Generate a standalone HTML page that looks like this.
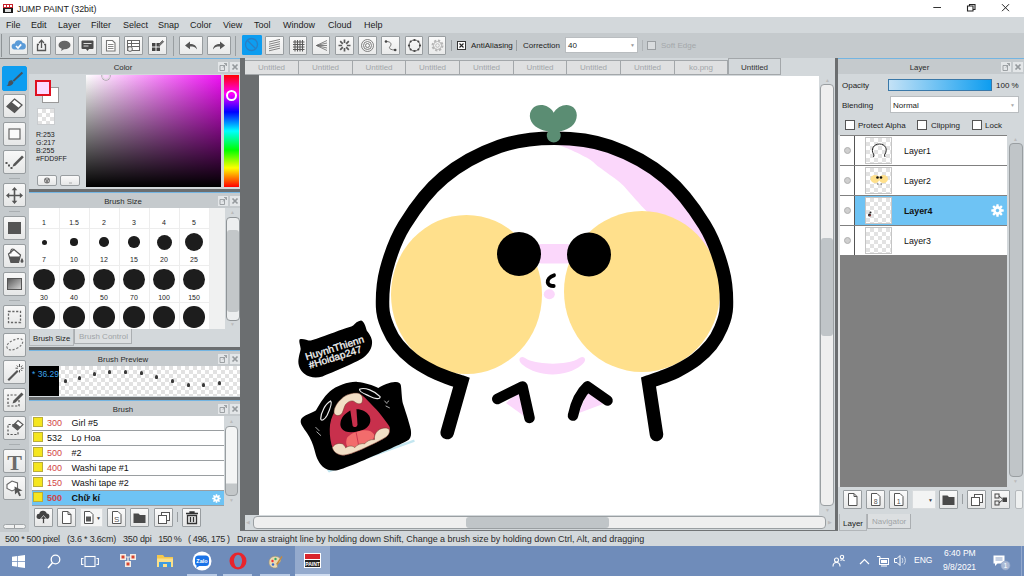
<!DOCTYPE html>
<html>
<head>
<meta charset="utf-8">
<title>JUMP PAINT (32bit)</title>
<style>
*{box-sizing:border-box;margin:0;padding:0}
html,body{width:1024px;height:576px;overflow:hidden;background:#d3d8db;font-family:"Liberation Sans",sans-serif;font-size:9px;color:#222}
.a{position:absolute}
div,span,svg{position:absolute}
.tx{white-space:nowrap;line-height:1}
.tb{top:36px;width:19px;height:19px;border:1px solid #989da0;background:linear-gradient(#fafafa,#e9eaea);border-radius:1px}
.tb svg,.lt svg,.bb svg{left:0;top:0}
.sep{width:1px;background:#999ea1}
.lt{left:3px;width:23px;height:24px;border:1px solid #989da0;background:linear-gradient(#f8f8f8,#e6e7e7);border-radius:2px}
.lsep{left:9px;width:11px;height:1px;background:#a9aeb1}
.ph{background:#c5cacd;border-top:1.500px solid #74b5e2;text-align:center;font-size:7.800px;line-height:16px;color:#2a2a2a;padding:1px 23px 0 0}
.pbtn{width:10px;height:10px;background:#e3e6e8}
.bb{width:19px;height:19px;border:1px solid #989da0;background:linear-gradient(#fafafa,#e6e7e7);border-radius:1px}
.dark{background:#6b6e70}
.row{left:32px;width:192px;height:14px;background:#fff}
.row .sq{left:1px;top:1px;width:10px;height:10px;background:#f5e61e;border:1px solid #b9ad3a}
.row .n{left:15px;top:3px;font-size:9px;color:#d24646}
.row .nm{left:39.500px;top:3px;font-size:9px;color:#111}
.lrow{left:840px;width:167px;height:29px;background:#fff}
.chk{background-color:#fff;background-image:linear-gradient(45deg,#e2e2e2 25%,transparent 25%,transparent 75%,#e2e2e2 75%),linear-gradient(45deg,#e2e2e2 25%,transparent 25%,transparent 75%,#e2e2e2 75%);background-size:6px 6px;background-position:0 0,3px 3px}
.cb{width:10px;height:10px;border:1px solid #555;background:#fff}
.tab{top:60px;height:15px;border:1px solid #a3a7aa;background:#dfe0e1;color:#a2a6a9;font-size:8px;text-align:center;line-height:14px}
</style>
</head>
<body>

<div style="left:0;top:0;width:1024px;height:17px;background:#fff">
<svg style="left:3px;top:4px" width="10" height="9" viewBox="0 0 10 9"><rect width="10" height="9" fill="#1a1a1a"/><rect width="10" height="4" fill="#c8202a"/><rect x="1" y="1" width="2" height="2" fill="#fff"/><rect x="4" y="1" width="2" height="2" fill="#fff"/><rect x="7" y="1" width="2" height="2" fill="#fff"/><rect x="2" y="5" width="6" height="3" fill="#ddd"/></svg>
<span class="tx" style="left:17px;top:4.500px;font-size:8.900px;color:#222">JUMP PAINT (32bit)</span>
<svg style="left:919px;top:0" width="100" height="16" viewBox="0 0 100 16"><path d="M14.300 7.500h7.700" stroke="#333" fill="none"/><path d="M48.500 6h5.500v5h-5.500zM50.500 6V4.500H56v5h-2" stroke="#222" stroke-width="1.100" fill="none"/><path d="M83 4.200l7 7M90 4.200l-7 7" stroke="#222" fill="none"/></svg>
</div>
<div style="left:0;top:17px;width:1024px;height:16px;background:#d3d8db">
<span class="tx" style="left:6px;top:4px;font-size:9px;color:#222">File</span>
<span class="tx" style="left:31px;top:4px;font-size:9px;color:#222">Edit</span>
<span class="tx" style="left:58px;top:4px;font-size:9px;color:#222">Layer</span>
<span class="tx" style="left:91px;top:4px;font-size:9px;color:#222">Filter</span>
<span class="tx" style="left:123px;top:4px;font-size:9px;color:#222">Select</span>
<span class="tx" style="left:158px;top:4px;font-size:9px;color:#222">Snap</span>
<span class="tx" style="left:190px;top:4px;font-size:9px;color:#222">Color</span>
<span class="tx" style="left:223px;top:4px;font-size:9px;color:#222">View</span>
<span class="tx" style="left:254px;top:4px;font-size:9px;color:#222">Tool</span>
<span class="tx" style="left:283px;top:4px;font-size:9px;color:#222">Window</span>
<span class="tx" style="left:328px;top:4px;font-size:9px;color:#222">Cloud</span>
<span class="tx" style="left:364px;top:4px;font-size:9px;color:#222">Help</span>
</div>
<div style="left:0;top:33px;width:1024px;height:25px;background:#c5cacd"></div>
<div class="sep" style="left:1px;top:34px;height:23px;background:#8e9396"></div>
<div style="left:0;top:58px;width:29px;height:1px;background:#7d8082;z-index:3"></div>
<div class="tb" style="left:9px;"><svg width="17" height="17" viewBox="0 0 17 17"><path d="M4.5 12.5a3 3 0 0 1 .3-6 4.2 4.2 0 0 1 8-.4 3.2 3.2 0 0 1 -.3 6.4z" fill="#5b9bd8"/><path d="M6 9l2 2 3.2-3.6" stroke="#fff" stroke-width="1.6" fill="none"/></svg></div>
<div class="tb" style="left:32px;"><svg width="17" height="17" viewBox="0 0 17 17"><path d="M6 7.5H4.5v6h8v-6H11" stroke="#555" stroke-width="1.3" fill="none"/><path d="M8.5 11V3.5M6 6l2.5-2.7L11 6" stroke="#555" stroke-width="1.3" fill="none"/></svg></div>
<div class="tb" style="left:55px;"><svg width="17" height="17" viewBox="0 0 17 17"><ellipse cx="8.5" cy="8" rx="6" ry="4.3" fill="#666"/><path d="M6 11l-1 3 4-2.5z" fill="#666"/></svg></div>
<div class="tb" style="left:78px;"><svg width="17" height="17" viewBox="0 0 17 17"><rect x="2.5" y="3.5" width="12" height="8.5" rx="1" fill="#4a4a4a"/><path d="M7 12l1.5 2 1.5-2z" fill="#4a4a4a"/><path d="M4.5 6.5h8M4.5 9h5" stroke="#ddd" stroke-width="1"/></svg></div>
<div class="tb" style="left:101px;"><svg width="17" height="17" viewBox="0 0 17 17"><path d="M4.5 3.5h6l2.5 2.5v8h-8.500z" stroke="#777" stroke-width="1.1" fill="#fff"/><path d="M6 7.500h5.500M6 9.500h5.500M6 11.500h5.500" stroke="#888" stroke-width="1"/></svg></div>
<div class="tb" style="left:124px;"><svg width="17" height="17" viewBox="0 0 17 17"><rect x="2.500" y="3.500" width="12" height="10" stroke="#666" fill="#fff"/><path d="M2.500 6.500h12M2.500 9.500h12M6.500 3.500v10" stroke="#666" fill="none"/><circle cx="5" cy="12" r="2.400" fill="#f1f1f1" stroke="#666"/></svg></div>
<div class="tb" style="left:148px;"><svg width="17" height="17" viewBox="0 0 17 17"><path d="M3 6h3.500v3.500H3zM7.500 6H11v3.500H7.500zM3 10.500h3.500V14H3zM7.500 10.500H11V14H7.500z" fill="#444"/><path d="M9 8l4.500-4.500 1.200 1.200L10.200 9.200z" fill="#777" stroke="#444" stroke-width=".6"/></svg></div>
<div class="sep" style="left:173px;top:36px;height:20px"></div>
<div class="tb" style="left:179px;width:24px"><svg width="22" height="17" viewBox="-2 0 22 17"><path d="M3 8.500l5-4v2.500c4 0 6.500 1.500 7 5.500-1.500-2.500-3.500-3-7-3v2.800z" fill="#555"/></svg></div>
<div class="tb" style="left:207px;width:24px"><svg width="22" height="17" viewBox="-1 0 22 17"><path d="M16 8.500l-5-4v2.500c-4 0-6.500 1.500-7 5.500 1.500-2.500 3.500-3 7-3v2.800z" fill="#555"/></svg></div>
<div class="sep" style="left:235px;top:36px;height:20px"></div>
<div class="tb" style="left:242px;background:#0d9df0;border-color:#0d9df0;width:20px;height:20px;top:35px"><svg width="17" height="17" viewBox="0 0 17 17"><circle cx="8.500" cy="8.500" r="6" stroke="#2a7fc4" stroke-width="1.300" fill="none"/><path d="M4.500 4.500l8 8" stroke="#2a7fc4" stroke-width="1.300"/></svg></div>
<div class="tb" style="left:265.3px;width:18.700px;"><svg width="17" height="17" viewBox="0 0 17 17"><path d="M3 7.200l11-2.600M3 9.400l11-2.600M3 11.600l11-2.600M3 13.800l11-2.600M3 5l11-2.600" stroke="#666" stroke-width=".8"/></svg></div>
<div class="tb" style="left:288.5px;width:18.700px;"><svg width="17" height="17" viewBox="0 0 17 17"><path d="M5 3v11.500M7.500 3v11.500M10 3v11.500M12.500 3v11.500M3 5h11.500M3 7.500h11.500M3 10h11.500M3 12.500h11.500" stroke="#5a5a5a" stroke-width="1.050"/></svg></div>
<div class="tb" style="left:311.7px;width:18.700px;"><svg width="17" height="17" viewBox="0 0 17 17"><path d="M3.500 8.500L14 3.500M3.500 8.500l10.500-2.500M3.500 8.500H14M3.500 8.500l10.500 2.500M3.500 8.500L14 13.500" stroke="#666" stroke-width=".8"/></svg></div>
<div class="tb" style="left:335.0px;width:18.700px;"><svg width="17" height="17" viewBox="0 0 17 17"><path d="M8.500 2.500v3.600M8.500 10.900v3.600M2.500 8.500h3.600M10.900 8.500h3.600M4.200 4.200l2.600 2.600M10.200 10.200l2.600 2.600M12.800 4.200l-2.600 2.600M6.800 10.200l-2.600 2.600" stroke="#5a5a5a" stroke-width="1.700"/></svg></div>
<div class="tb" style="left:358.2px;width:18.700px;"><svg width="17" height="17" viewBox="0 0 17 17"><circle cx="8.500" cy="8.500" r="6" stroke="#666" stroke-width=".8" fill="none"/><circle cx="8.500" cy="8.500" r="4" stroke="#666" stroke-width=".8" fill="none"/><circle cx="8.500" cy="8.500" r="2" stroke="#666" stroke-width=".8" fill="none"/></svg></div>
<div class="tb" style="left:381.4px;width:18.700px;"><svg width="17" height="17" viewBox="0 0 17 17"><path d="M4 4.500c6 0 5.500 3.500 4 5S8 13 13 13" stroke="#666" stroke-width=".9" fill="none"/><circle cx="4" cy="4.500" r="1.300" fill="#444"/><circle cx="13.200" cy="13" r="1.300" fill="#444"/></svg></div>
<div class="tb" style="left:404.6px;width:18.700px;"><svg width="17" height="17" viewBox="0 0 17 17"><circle cx="8.500" cy="8.500" r="5.500" stroke="#555" stroke-width="1" fill="none"/><g fill="#444"><circle cx="8.500" cy="3" r="1.100"/><circle cx="8.500" cy="14" r="1.100"/><circle cx="3" cy="8.500" r="1.100"/><circle cx="14" cy="8.500" r="1.100"/><circle cx="4.600" cy="4.600" r="1"/><circle cx="12.400" cy="4.600" r="1"/><circle cx="4.600" cy="12.400" r="1"/><circle cx="12.400" cy="12.400" r="1"/></g></svg></div>
<div class="tb" style="left:427.8px;width:18.700px;"><svg width="17" height="17" viewBox="0 0 17 17"><circle cx="8.500" cy="8.500" r="5" stroke="#b5b5b5" stroke-width="2" stroke-dasharray="2.200 1.700" fill="none"/><circle cx="8.500" cy="8.500" r="4" stroke="#b5b5b5" stroke-width="1" fill="none"/><circle cx="8.500" cy="8.500" r="1.800" stroke="#b5b5b5" stroke-width=".9" fill="none"/></svg></div>
<div class="sep" style="left:451px;top:40px;height:11px"></div>
<div style="left:457px;top:41px;width:9px;height:9px;border:1px solid #333;background:#fff"><svg style="left:0;top:0" width="7" height="7" viewBox="0 0 7 7"><path d="M1.500 1.500l4 4M5.500 1.500l-4 4" stroke="#222" stroke-width="1.100"/></svg></div>
<span class="tx" style="left:471px;top:42px;font-size:8px;color:#222">AntiAliasing</span>
<div class="sep" style="left:516px;top:40px;height:11px"></div>
<span class="tx" style="left:523px;top:42px;font-size:8px;color:#222">Correction</span>
<div style="left:565px;top:37px;width:73px;height:16px;background:#fff;border:1px solid #b9bdc0"><span class="tx" style="left:2px;top:4px;font-size:8px;color:#222">40</span><span class="tx" style="left:64px;top:5px;font-size:5px;color:#999">&#9660;</span></div>
<div class="sep" style="left:642px;top:40px;height:11px;background:#b0b4b7"></div>
<div style="left:647px;top:41px;width:9px;height:9px;border:1px solid #9b9fa2;background:#d9dcde"></div>
<span class="tx" style="left:661px;top:42px;font-size:8px;color:#a4a8ab">Soft Edge</span>
<div style="left:0;top:58px;width:29px;height:474px;background:#c5cacd"></div>
<div class="lt" style="top:66px;background:#0d9df0;border-color:#0d9df0;left:2px;width:25px;height:25px;"><svg width="23" height="23" viewBox="0.5 0 24 23"><path d="M20 4.500L10.500 13.500l1.500 1.500L21.500 6z" fill="#46525e"/><path d="M10 13.500c-2-.500-4 1-4 3 0 1.500-1 2-2 2.300 2.500 1 6.500.500 7.500-3z" fill="#46525e"/></svg></div>
<div class="lt" style="top:94px;"><svg width="21" height="22" viewBox="1.5 0.5 21 22"><path d="M12 4.500l7.500 6-7.500 7.500-7.500-6z" fill="#fff" stroke="#555" stroke-width="1.300"/><path d="M4.500 12l4.500-4.500 7.500 6-4.500 4.500z" fill="#555"/></svg></div>
<div class="lt" style="top:122px;"><svg width="21" height="22" viewBox="1.5 0.5 21 22"><rect x="6.500" y="6.500" width="11" height="10" fill="#fafafa" stroke="#666" stroke-width="1.200"/></svg></div>
<div class="lt" style="top:150px;"><svg width="21" height="22" viewBox="1.5 0.5 21 22"><path d="M19.500 5l1.800 1.800-8.500 8.500-2.800 1 1-2.800z" fill="#555"/><path d="M3 11.500h2v2H3zM5.500 14h2v2h-2zM8 16.500h2v2H8z" fill="#555"/></svg></div>
<div class="lt" style="top:183px;"><svg width="21" height="22" viewBox="1.5 0.5 21 22"><path d="M12 3.500l2.800 3.200h-2v4.500h4.500v-2l3.200 2.800-3.200 2.800v-2h-4.500v4.500h2L12 20.500l-2.800-3.200h2v-4.500H6.700v2L3.500 12l3.200-2.800v2h4.500V6.700h-2z" fill="#555"/></svg></div>
<div class="lt" style="top:216px;"><svg width="21" height="22" viewBox="1.5 0.5 21 22"><rect x="6" y="6" width="12" height="11" fill="#555" stroke="#555"/></svg></div>
<div class="lt" style="top:244px;"><svg width="21" height="22" viewBox="1.5 0.5 21 22"><path d="M6 9.500l5.500-4.500 6.500 5.500-2 7.500H8.500z" fill="#fff" stroke="#555" stroke-width="1.200"/><path d="M6.800 12h10.700l-1.500 6H8.500z" fill="#555"/><path d="M11.500 5c-2.500-1.500-4 1-3 4" stroke="#555" stroke-width="1.100" fill="none"/><path d="M19.500 13.500c1 1.700 1.500 2.500 1.500 3.300a1.500 1.500 0 0 1-3 0c0-.800.500-1.600 1.500-3.300z" fill="#555"/></svg></div>
<div class="lt" style="top:272px;"><svg width="21" height="22" viewBox="1.5 0.5 21 22"><defs><linearGradient id="gg" x1="0" y1="0" x2="1" y2="1"><stop offset="0" stop-color="#555"/><stop offset="1" stop-color="#d8d8d8"/></linearGradient></defs><rect x="5" y="6" width="14" height="11" fill="url(#gg)" stroke="#555"/></svg></div>
<div class="lt" style="top:304.5px;"><svg width="21" height="22" viewBox="1.5 0.5 21 22"><rect x="6" y="6" width="12" height="11" fill="none" stroke="#666" stroke-width="1.300" stroke-dasharray="2.200 1.600"/></svg></div>
<div class="lt" style="top:332.5px;"><svg width="21" height="22" viewBox="1.5 0.5 21 22"><path d="M5 15c-2-3 1-6 5-8s9-3 10 0-2 6-6 8-7 2-9 0z" fill="none" stroke="#777" stroke-width="1.200" stroke-dasharray="2.200 1.600"/></svg></div>
<div class="lt" style="top:360px;"><svg width="21" height="22" viewBox="1.5 0.5 21 22"><path d="M5 19l9.500-9.500 1.500 1.500L6.500 20.500z" fill="#555"/><path d="M17 3.500v3M17 9.500v2.500M13 7.700h2.500M18.500 7.700H21M14.300 5l1.500 1.500M19.800 5l-1.500 1.500M19.800 10.500l-1.500-1.500" stroke="#555" stroke-width="1"/></svg></div>
<div class="lt" style="top:388px;"><svg width="21" height="22" viewBox="1.5 0.5 21 22"><path d="M14 6.500H5.500v11h11V11" fill="none" stroke="#555" stroke-width="1.200" stroke-dasharray="2.200 1.600"/><path d="M19 4l2 2-8 8-3 1 1-3z" fill="#555"/></svg></div>
<div class="lt" style="top:416px;"><svg width="21" height="22" viewBox="1.5 0.5 21 22"><path d="M12 8H5.500v10h10v-4" fill="none" stroke="#555" stroke-width="1.200" stroke-dasharray="2.200 1.600"/><path d="M15.500 4l5 4-5.500 5.500-5-4z" fill="#fff" stroke="#555" stroke-width="1.100"/><path d="M10 9.500l3-3 5 4-3 3z" fill="#555"/></svg></div>
<div class="lt" style="top:448.5px;"><svg width="21" height="22" viewBox="1.5 0.5 21 22"><text x="12" y="20" text-anchor="middle" font-family="Liberation Serif,serif" font-size="22" font-weight="bold" fill="#6a6a6a">T</text></svg></div>
<div class="lt" style="top:476px;"><svg width="21" height="22" viewBox="1.5 0.5 21 22"><path d="M4.500 8l5-3.500 5.500 2v5.500l-5.500 2.500-5-2.500z" fill="#fff" stroke="#666" stroke-width="1.100"/><path d="M12 10l8 4-3.500.800L18.500 19l-1.800.800-1.800-4L12.500 18z" fill="#555"/></svg></div>
<div class="lsep" style="top:178px"></div>
<div class="lsep" style="top:211px"></div>
<div class="lsep" style="top:300px"></div>
<div class="lsep" style="top:444px"></div>
<div style="left:3px;top:524px;width:23px;height:5px;border:1px solid #a0a5a8;border-radius:3px;background:#f0f1f1"></div>
<div style="left:14px;top:525px;width:1px;height:3px;background:#999"></div>
<div style="left:29px;top:58px;width:211px;height:474px;background:#d3d8db"></div>
<div class="dark" style="left:240px;top:58px;width:5px;height:473px"></div>
<div class="ph" style="left:29px;top:57.5px;width:211px;height:16.5px">Color</div>
<div class="pbtn" style="left:217.5px;top:62px"><svg style="left:0;top:0" width="10" height="10" viewBox="-0.5 0 10 10"><path d="M1.500 3.500h4.500v5H1.500zM4.500 5.500L8 1.500M5.500 1.500H8V4" stroke="#959a9d" stroke-width=".9" fill="none"/></svg></div>
<div class="pbtn" style="left:229.5px;top:62px"><svg style="left:0;top:0" width="10" height="10" viewBox="-0.5 0 10 10"><path d="M2 2.500l5 5M7 2.500l-5 5" stroke="#959a9d" stroke-width="1.700" fill="none"/></svg></div>
<div style="left:35px;top:80px;width:17px;height:16px;background:#fff;border:1px solid #999;left:42px;top:87px"></div>
<div style="left:35px;top:80px;width:16px;height:16px;background:#fdd9ff;border:2px solid #df1020"></div>
<div class="chk" style="left:37px;top:108px;width:18px;height:17px;border:1px solid #c9cccf;background-size:8px 8px;background-position:0 0,4px 4px"></div>
<span class="tx" style="left:36px;top:131px;font-size:7px;color:#222">R:253</span>
<span class="tx" style="left:36px;top:139px;font-size:7px;color:#222">G:217</span>
<span class="tx" style="left:36px;top:147px;font-size:7px;color:#222">B:255</span>
<span class="tx" style="left:36px;top:155px;font-size:7px;color:#222">#FDD9FF</span>
<div class="bb" style="left:37px;top:175px;width:20px;height:11px;border-radius:2px"><svg width="18" height="9" viewBox="0 0 18 9"><circle cx="9" cy="4.500" r="3" fill="#777"/><circle cx="9" cy="3" r=".8" fill="#ddd"/><circle cx="7.500" cy="5" r=".8" fill="#ddd"/><circle cx="10.500" cy="5" r=".8" fill="#ddd"/></svg></div>
<div class="bb" style="left:60px;top:175px;width:20px;height:11px;border-radius:2px"><svg width="18" height="9" viewBox="0 0 18 9"><path d="M8 7h3" stroke="#aaa"/></svg></div>
<div style="left:86px;top:75px;width:135px;height:112px;background:linear-gradient(to top,#000,rgba(0,0,0,0)),linear-gradient(to right,#fff,#f012f5)"></div>
<div style="left:102px;top:72px;width:8px;height:8px;border:1px solid #d8d8d8;border-radius:50%;box-shadow:0 0 0 .5px #888;clip-path:inset(3px -2px -2px -2px)"></div>
<div style="left:224px;top:75px;width:15px;height:112px;background:linear-gradient(to bottom,#f00 0%,#f0f 17%,#00f 33%,#0ff 50%,#0f0 67%,#ff0 83%,#f00 100%)"></div>
<div style="left:226px;top:90px;width:11px;height:11px;border:2px solid #fff;border-radius:50%"></div>
<div class="dark" style="left:29px;top:189px;width:211px;height:3px"></div>
<div class="ph" style="left:29px;top:191.5px;width:211px;height:16.5px">Brush Size</div>
<div class="pbtn" style="left:217.5px;top:196px"><svg style="left:0;top:0" width="10" height="10" viewBox="-0.5 0 10 10"><path d="M1.500 3.500h4.500v5H1.500zM4.500 5.500L8 1.500M5.500 1.500H8V4" stroke="#959a9d" stroke-width=".9" fill="none"/></svg></div>
<div class="pbtn" style="left:229.5px;top:196px"><svg style="left:0;top:0" width="10" height="10" viewBox="-0.5 0 10 10"><path d="M2 2.500l5 5M7 2.500l-5 5" stroke="#959a9d" stroke-width="1.700" fill="none"/></svg></div>
<div style="left:29px;top:208px;width:196px;height:121px;background:#fff;overflow:hidden">
<div style="left:180px;top:0;width:16px;height:121px;background:#f0f1f1"></div>
<div style="left:30px;top:0;width:1px;height:121px;background:#ededed"></div>
<div style="left:60px;top:0;width:1px;height:121px;background:#ededed"></div>
<div style="left:90px;top:0;width:1px;height:121px;background:#ededed"></div>
<div style="left:120px;top:0;width:1px;height:121px;background:#ededed"></div>
<div style="left:150px;top:0;width:1px;height:121px;background:#ededed"></div>
<div style="left:180px;top:0;width:1px;height:121px;background:#ededed"></div>
<div style="left:0;top:-17px;width:180px;height:1px;background:#ededed"></div>
<div style="left:0;top:20px;width:180px;height:1px;background:#ededed"></div>
<div style="left:0;top:57px;width:180px;height:1px;background:#ededed"></div>
<div style="left:0;top:94px;width:180px;height:1px;background:#ededed"></div>
<span class="tx" style="left:0px;top:11px;width:30px;text-align:center;font-size:7px;color:#222">1</span>
<div style="left:12.5px;top:31.5px;width:5.0px;height:5.0px;border-radius:50%;background:#1d1d1d"></div>
<span class="tx" style="left:30px;top:11px;width:30px;text-align:center;font-size:7px;color:#222">1.5</span>
<div style="left:41.2px;top:30.2px;width:7.5px;height:7.5px;border-radius:50%;background:#1d1d1d"></div>
<span class="tx" style="left:60px;top:11px;width:30px;text-align:center;font-size:7px;color:#222">2</span>
<div style="left:70.2px;top:29.2px;width:9.5px;height:9.5px;border-radius:50%;background:#1d1d1d"></div>
<span class="tx" style="left:90px;top:11px;width:30px;text-align:center;font-size:7px;color:#222">3</span>
<div style="left:99.2px;top:28.2px;width:11.5px;height:11.5px;border-radius:50%;background:#1d1d1d"></div>
<span class="tx" style="left:120px;top:11px;width:30px;text-align:center;font-size:7px;color:#222">4</span>
<div style="left:127.5px;top:26.5px;width:15.0px;height:15.0px;border-radius:50%;background:#1d1d1d"></div>
<span class="tx" style="left:150px;top:11px;width:30px;text-align:center;font-size:7px;color:#222">5</span>
<div style="left:155.8px;top:24.8px;width:18.5px;height:18.5px;border-radius:50%;background:#1d1d1d"></div>
<span class="tx" style="left:0px;top:48px;width:30px;text-align:center;font-size:7px;color:#222">7</span>
<div style="left:4.2px;top:60.8px;width:21.5px;height:21.5px;border-radius:50%;background:#1d1d1d"></div>
<span class="tx" style="left:30px;top:48px;width:30px;text-align:center;font-size:7px;color:#222">10</span>
<div style="left:34.2px;top:60.8px;width:21.5px;height:21.5px;border-radius:50%;background:#1d1d1d"></div>
<span class="tx" style="left:60px;top:48px;width:30px;text-align:center;font-size:7px;color:#222">12</span>
<div style="left:64.2px;top:60.8px;width:21.5px;height:21.5px;border-radius:50%;background:#1d1d1d"></div>
<span class="tx" style="left:90px;top:48px;width:30px;text-align:center;font-size:7px;color:#222">15</span>
<div style="left:94.2px;top:60.8px;width:21.5px;height:21.5px;border-radius:50%;background:#1d1d1d"></div>
<span class="tx" style="left:120px;top:48px;width:30px;text-align:center;font-size:7px;color:#222">20</span>
<div style="left:124.2px;top:60.8px;width:21.5px;height:21.5px;border-radius:50%;background:#1d1d1d"></div>
<span class="tx" style="left:150px;top:48px;width:30px;text-align:center;font-size:7px;color:#222">25</span>
<div style="left:154.2px;top:60.8px;width:21.5px;height:21.5px;border-radius:50%;background:#1d1d1d"></div>
<span class="tx" style="left:0px;top:86px;width:30px;text-align:center;font-size:7px;color:#222">30</span>
<div style="left:4.2px;top:98.2px;width:21.5px;height:21.5px;border-radius:50%;background:#1d1d1d"></div>
<span class="tx" style="left:30px;top:86px;width:30px;text-align:center;font-size:7px;color:#222">40</span>
<div style="left:34.2px;top:98.2px;width:21.5px;height:21.5px;border-radius:50%;background:#1d1d1d"></div>
<span class="tx" style="left:60px;top:86px;width:30px;text-align:center;font-size:7px;color:#222">50</span>
<div style="left:64.2px;top:98.2px;width:21.5px;height:21.5px;border-radius:50%;background:#1d1d1d"></div>
<span class="tx" style="left:90px;top:86px;width:30px;text-align:center;font-size:7px;color:#222">70</span>
<div style="left:94.2px;top:98.2px;width:21.5px;height:21.5px;border-radius:50%;background:#1d1d1d"></div>
<span class="tx" style="left:120px;top:86px;width:30px;text-align:center;font-size:7px;color:#222">100</span>
<div style="left:124.2px;top:98.2px;width:21.5px;height:21.5px;border-radius:50%;background:#1d1d1d"></div>
<span class="tx" style="left:150px;top:86px;width:30px;text-align:center;font-size:7px;color:#222">150</span>
<div style="left:154.2px;top:98.2px;width:21.5px;height:21.5px;border-radius:50%;background:#1d1d1d"></div>
</div>
<div style="left:225px;top:208px;width:16px;height:121px;background:#d3d8db"></div>
<div style="left:226px;top:217px;width:14px;height:104px;border:1px solid #8f9497;border-radius:4px;background:#eceeef"></div>
<div style="left:227px;top:230px;width:12px;height:82px;border-radius:3px;background:#c3c7c9"></div>
<span class="tx" style="left:230px;top:210px;font-size:5px;color:#bbb">&#9650;</span>
<span class="tx" style="left:230px;top:322px;font-size:5px;color:#bbb">&#9660;</span>
<div style="left:29px;top:329px;width:45px;height:17px;background:#d3d8db;border:1px solid #b2b6b9;border-top:none"><span class="tx" style="left:3px;top:6px;font-size:7.700px;color:#222">Brush Size</span></div>
<div style="left:74px;top:329px;width:58px;height:15px;background:#dcdfe1;border:1px solid #aaaeb1;border-top:none"><span class="tx" style="left:4px;top:4px;font-size:8px;color:#a0a4a7">Brush Control</span></div>
<div class="dark" style="left:29px;top:347px;width:211px;height:3px"></div>
<div class="ph" style="left:29px;top:349.5px;width:211px;height:16.5px">Brush Preview</div>
<div class="pbtn" style="left:217.5px;top:354px"><svg style="left:0;top:0" width="10" height="10" viewBox="-0.5 0 10 10"><path d="M1.500 3.500h4.500v5H1.500zM4.500 5.500L8 1.500M5.500 1.500H8V4" stroke="#959a9d" stroke-width=".9" fill="none"/></svg></div>
<div class="pbtn" style="left:229.5px;top:354px"><svg style="left:0;top:0" width="10" height="10" viewBox="-0.5 0 10 10"><path d="M2 2.500l5 5M7 2.500l-5 5" stroke="#959a9d" stroke-width="1.700" fill="none"/></svg></div>
<div class="chk" style="left:29px;top:366px;width:211px;height:30px;background-size:8px 8px;background-position:0 0,4px 4px"></div>
<div style="left:29px;top:366px;width:30px;height:30px;background:#000;overflow:hidden"><span class="tx" style="left:3px;top:4px;font-size:8.500px;color:#3aa0e8">* 36.29</span></div>
<div style="left:64px;top:379px;width:3px;height:4px;background:#3a3a3a;border-radius:1.500px 1.500px 1px 1px"></div>
<div style="left:78px;top:376px;width:3px;height:4px;background:#3a3a3a;border-radius:1.500px 1.500px 1px 1px"></div>
<div style="left:93px;top:372px;width:3px;height:4px;background:#3a3a3a;border-radius:1.500px 1.500px 1px 1px"></div>
<div style="left:108px;top:370px;width:3px;height:4px;background:#3a3a3a;border-radius:1.500px 1.500px 1px 1px"></div>
<div style="left:124px;top:370px;width:3px;height:4px;background:#3a3a3a;border-radius:1.500px 1.500px 1px 1px"></div>
<div style="left:140px;top:371px;width:3px;height:4px;background:#3a3a3a;border-radius:1.500px 1.500px 1px 1px"></div>
<div style="left:155px;top:375px;width:3px;height:4px;background:#3a3a3a;border-radius:1.500px 1.500px 1px 1px"></div>
<div style="left:171px;top:379px;width:3px;height:4px;background:#3a3a3a;border-radius:1.500px 1.500px 1px 1px"></div>
<div style="left:187px;top:383px;width:3px;height:4px;background:#3a3a3a;border-radius:1.500px 1.500px 1px 1px"></div>
<div style="left:202px;top:383px;width:3px;height:4px;background:#3a3a3a;border-radius:1.500px 1.500px 1px 1px"></div>
<div style="left:218px;top:381px;width:3px;height:4px;background:#3a3a3a;border-radius:1.500px 1.500px 1px 1px"></div>
<div class="dark" style="left:29px;top:397px;width:211px;height:3px"></div>
<div class="ph" style="left:29px;top:399.5px;width:211px;height:16.5px">Brush</div>
<div class="pbtn" style="left:217.5px;top:404px"><svg style="left:0;top:0" width="10" height="10" viewBox="-0.5 0 10 10"><path d="M1.500 3.500h4.500v5H1.500zM4.500 5.500L8 1.500M5.500 1.500H8V4" stroke="#959a9d" stroke-width=".9" fill="none"/></svg></div>
<div class="pbtn" style="left:229.5px;top:404px"><svg style="left:0;top:0" width="10" height="10" viewBox="-0.5 0 10 10"><path d="M2 2.500l5 5M7 2.500l-5 5" stroke="#959a9d" stroke-width="1.700" fill="none"/></svg></div>
<div style="left:32px;top:416px;width:192px;height:90px;background:#9a9ea1"></div>
<div class="row" style="top:416px;background:#fff"><div class="sq"></div><span class="tx n" style="color:#d24646;">300</span><span class="tx nm" style="">Girl #5</span></div>
<div class="row" style="top:431px;background:#fff"><div class="sq"></div><span class="tx n" style="color:#111;">532</span><span class="tx nm" style="">Lọ Hoa</span></div>
<div class="row" style="top:446px;background:#fff"><div class="sq"></div><span class="tx n" style="color:#d24646;">500</span><span class="tx nm" style="">#2</span></div>
<div class="row" style="top:461px;background:#fff"><div class="sq"></div><span class="tx n" style="color:#d24646;">400</span><span class="tx nm" style="">Washi tape #1</span></div>
<div class="row" style="top:476px;background:#fff"><div class="sq"></div><span class="tx n" style="color:#d24646;">150</span><span class="tx nm" style="">Washi tape #2</span></div>
<div class="row" style="top:491px;background:#6ec3f4"><div class="sq"></div><span class="tx n" style="color:#d24646;font-weight:bold;">500</span><span class="tx nm" style="font-weight:bold;">Chữ kí</span><svg style="left:180px;top:3px" width="9" height="9" viewBox="0 0 9 9"><rect x="3.700" y="0.200" width="1.600" height="2.200" rx=".3" fill="#fff" transform="rotate(0 4.500 4.500)"/><rect x="3.700" y="0.200" width="1.600" height="2.200" rx=".3" fill="#fff" transform="rotate(45 4.500 4.500)"/><rect x="3.700" y="0.200" width="1.600" height="2.200" rx=".3" fill="#fff" transform="rotate(90 4.500 4.500)"/><rect x="3.700" y="0.200" width="1.600" height="2.200" rx=".3" fill="#fff" transform="rotate(135 4.500 4.500)"/><rect x="3.700" y="0.200" width="1.600" height="2.200" rx=".3" fill="#fff" transform="rotate(180 4.500 4.500)"/><rect x="3.700" y="0.200" width="1.600" height="2.200" rx=".3" fill="#fff" transform="rotate(225 4.500 4.500)"/><rect x="3.700" y="0.200" width="1.600" height="2.200" rx=".3" fill="#fff" transform="rotate(270 4.500 4.500)"/><rect x="3.700" y="0.200" width="1.600" height="2.200" rx=".3" fill="#fff" transform="rotate(315 4.500 4.500)"/><circle cx="4.500" cy="4.500" r="3" fill="#fff"/><circle cx="4.500" cy="4.500" r="1.100" fill="#6ec3f4"/></svg></div>
<div style="left:225px;top:426px;width:13px;height:70px;border:1px solid #999ea1;border-radius:4px;background:linear-gradient(#f4f5f5 0,#f4f5f5 56px,#c3c7c9 57px,#c3c7c9 100%)"></div>
<span class="tx" style="left:229px;top:419px;font-size:5px;color:#bbb">&#9650;</span>
<span class="tx" style="left:229px;top:498px;font-size:5px;color:#bbb">&#9660;</span>
<div class="bb" style="left:34px;top:508px;width:19px"><svg width="17" height="17" viewBox="0 0 17 17"><path d="M4 10a2.600 2.600 0 0 1 .3-5.200 3.800 3.800 0 0 1 7.400-.4 2.800 2.800 0 0 1-.2 5.600z" fill="#444"/><path d="M8.500 6.500l3 3.500h-2v4.500h-2V10h-2z" fill="#444" stroke="#f1f1f1" stroke-width=".7"/></svg></div>
<div class="bb" style="left:57px;top:508px;width:19px"><svg width="17" height="17" viewBox="0 0 17 17"><path d="M4.500 2.500h5.500l3 3v9h-8.500z" fill="#fff" stroke="#555" stroke-width="1"/><path d="M10 2.500v3h3" fill="none" stroke="#555" stroke-width="1"/></svg></div>
<div class="bb" style="left:80px;top:508px;width:23px;border-color:#d9dcde;background:#f3f4f4"><svg width="17" height="17" viewBox="0 0 17 17"><path d="M3.500 2.500h5.500l3 3v9h-8.500z" fill="#fff" stroke="#555" stroke-width="1"/><rect x="5" y="7.500" width="5" height="5" fill="#555"/></svg><span class="tx" style="left:15px;top:7px;font-size:5px;color:#444">&#9660;</span></div>
<div class="bb" style="left:107px;top:508px;width:19px"><svg width="17" height="17" viewBox="0 0 17 17"><path d="M4.500 2.500h5.500l3 3v9h-8.500z" fill="#fff" stroke="#555" stroke-width="1"/><text x="8.700" y="13" text-anchor="middle" font-size="8" font-family="Liberation Sans,sans-serif" fill="#555">S</text></svg></div>
<div class="bb" style="left:130px;top:508px;width:19px"><svg width="17" height="17" viewBox="0 0 17 17"><path d="M2.500 4.500h5l1.500 1.500h5.500v8h-12z" fill="#4a4a4a"/></svg></div>
<div class="bb" style="left:154px;top:508px;width:19px"><svg width="17" height="17" viewBox="0 0 17 17"><rect x="6.500" y="3.500" width="8" height="8" fill="#fff" stroke="#555"/><rect x="3.500" y="6.500" width="8" height="8" fill="#fff" stroke="#555"/></svg></div>
<div class="sep" style="left:177px;top:512px;height:10px"></div>
<div class="bb" style="left:182px;top:508px;width:19px"><svg width="17" height="17" viewBox="0 0 17 17"><path d="M4.500 6.500h9v8h-9z" fill="none" stroke="#333" stroke-width="1.300"/><path d="M3 4.500h12M7 4.500V3h4v1.500M7.500 8v5M10.500 8v5" stroke="#333" stroke-width="1.300" fill="none"/></svg></div>
<div style="left:245px;top:58px;width:590px;height:18px;background:#d3d8db"></div>
<div class="tab" style="left:244px;width:55px">Untitled</div>
<div class="tab" style="left:298px;width:55px">Untitled</div>
<div class="tab" style="left:352px;width:54px">Untitled</div>
<div class="tab" style="left:405px;width:55px">Untitled</div>
<div class="tab" style="left:459px;width:55px">Untitled</div>
<div class="tab" style="left:513px;width:54px">Untitled</div>
<div class="tab" style="left:566px;width:55px">Untitled</div>
<div class="tab" style="left:620px;width:55px">Untitled</div>
<div class="tab" style="left:674px;width:54px">ko.png</div>
<div class="tab" style="left:728px;width:53px;top:58px;height:17px;background:#d3d8db;color:#333;line-height:18px">Untitled</div>
<div class="dark" style="left:240px;top:75px;width:19px;height:440px"></div>
<div class="dark" style="left:240px;top:58px;width:5px;height:473px"></div>
<div style="left:259px;top:76px;width:560px;height:439px;background:#fff"></div>
<div style="left:819px;top:76px;width:16px;height:455px;background:#d3d8db"></div>
<div style="left:245px;top:515px;width:590px;height:17px;background:#d3d8db"></div>
<div style="left:820px;top:84px;width:14px;height:422px;border:1px solid #9a9fa2;border-radius:4px;background:#efefef"></div>
<div style="left:821px;top:238px;width:12px;height:98px;border-radius:3px;background:#c0c5c8"></div>
<div style="left:253px;top:516px;width:573px;height:13px;border:1px solid #9a9fa2;border-radius:4px;background:#efefef"></div>
<div style="left:466px;top:517px;width:143px;height:11px;border-radius:3px;background:#c0c5c8"></div>
<span class="tx" style="left:825px;top:78px;font-size:5px;color:#bbb">&#9650;</span>
<span class="tx" style="left:825px;top:508px;font-size:5px;color:#bbb">&#9660;</span>
<span class="tx" style="left:246px;top:520px;font-size:5px;color:#bbb">&#9664;</span>
<span class="tx" style="left:828px;top:520px;font-size:5px;color:#bbb">&#9654;</span>
<svg style="left:259px;top:76px" width="560" height="439" viewBox="259 76 560 439">
<path d="M554.5 139.0 C557.0 139.1 564.5 139.2 569.5 139.6 C574.5 140.0 579.4 140.6 584.4 141.4 C589.3 142.3 594.2 143.3 599.0 144.5 C603.8 145.7 608.6 147.1 613.3 148.7 C618.0 150.3 622.7 152.1 627.2 154.1 C631.7 156.1 636.2 158.2 640.5 160.6 C644.8 162.9 649.1 165.4 653.2 168.1 C657.2 170.8 661.2 173.7 665.1 176.7 C668.9 179.7 672.6 182.8 676.1 186.2 C679.7 189.5 683.0 192.9 686.3 196.5 C689.5 200.1 692.5 203.8 695.4 207.7 C698.3 211.5 701.0 215.4 703.5 219.5 C706.0 223.6 708.3 227.7 710.4 232.0 C712.5 236.2 714.4 240.5 716.1 244.9 C717.8 249.3 719.3 253.8 720.6 258.3 C721.9 262.8 723.3 269.8 723.9 272.0 L716.0 275.0 C711.7 270.8 698.0 257.5 690.0 250.0 C682.0 242.5 674.5 235.8 668.0 230.0 C661.5 224.2 655.1 218.7 651.0 215.0 C646.9 211.3 647.2 211.8 643.5 208.0 C639.8 204.2 632.9 196.2 629.0 192.0 C625.1 187.8 625.0 186.7 620.0 182.5 C615.0 178.3 604.2 170.9 599.0 167.0 C593.8 163.1 593.8 161.9 589.0 159.0 C584.2 156.1 575.5 152.0 570.0 149.5 C564.5 147.0 558.3 144.9 556.0 144.0Z" fill="#fbd7fb"/>
<rect x="536" y="244" width="36" height="19.500" rx="5" fill="#fbd7fb"/>
<ellipse cx="549.300" cy="294.200" rx="5.500" ry="5" fill="#fbd7fb"/>
<ellipse cx="466.500" cy="294.500" rx="75.500" ry="79.500" fill="#ffe08c"/>
<ellipse cx="642" cy="291.500" rx="78" ry="80.500" fill="#ffe08c"/>
<path d="M520.500 357.500C518.500 359 519.500 362.500 523 365C538 377.500 567 377.500 581.500 365C585 362.500 586 359 584 357.500C582 356 580 357.500 577 359.500C566 365 540 365 527.500 359.500C524.500 357.500 522.500 356 520.500 357.500Z" fill="#fbd7fb"/>
<path d="M521 390L506 403L524 416Z" fill="#fbd7fb"/>
<path d="M588 390L603 404L579 413Z" fill="#fbd7fb"/>
<path d="M447.2 432.6L461.5 382 C459.1 381.2 452.1 379.2 447.0 377.3 C441.9 375.4 436.7 373.5 431.0 370.5 C425.3 367.5 418.5 363.8 413.0 359.5 C407.5 355.2 402.2 350.2 398.0 345.0 C393.8 339.8 390.6 334.3 388.0 328.0 C385.4 321.7 382.9 316.7 382.6 307.0 C382.3 297.3 382.7 283.7 386.3 270.0 C389.9 256.3 395.0 240.4 404.5 225.0 C414.0 209.6 427.7 190.6 443.5 177.5 C459.3 164.4 480.9 152.9 499.4 146.4 C517.9 139.9 536.1 138.3 554.5 138.3 C572.9 138.3 591.1 139.9 609.6 146.4 C628.1 152.9 649.7 164.4 665.5 177.5 C681.3 190.6 695.0 209.6 704.5 225.0 C714.0 240.4 719.1 256.3 722.7 270.0 C726.4 283.7 726.7 297.3 726.4 307.0 C726.1 316.7 723.6 321.7 721.0 328.0 C718.4 334.3 715.2 339.8 711.0 345.0 C706.8 350.2 701.5 355.2 696.0 359.5 C690.5 363.8 683.7 367.5 678.0 370.5 C672.3 373.5 666.9 375.4 662.0 377.3 C657.1 379.2 650.8 381.2 648.5 382.0L656.5 434.5" fill="none" stroke="#000" stroke-width="13.500" stroke-linecap="round" stroke-linejoin="miter"/>
<path d="M497.300 399L522.500 386.500L529.500 418" fill="none" stroke="#000" stroke-width="10.500" stroke-linecap="round" stroke-linejoin="round"/>
<path d="M573 415.500Q577 396 587.500 386.500L607.500 400.500" fill="none" stroke="#000" stroke-width="10.500" stroke-linecap="round" stroke-linejoin="round"/>
<circle cx="519" cy="254" r="22" fill="#000"/><circle cx="589" cy="254.500" r="22" fill="#000"/>
<path d="M554 275.300C549.500 276.500 547.300 280 547.700 282.500C548.300 285 551 286 553.700 286" fill="none" stroke="#000" stroke-width="3.800" stroke-linecap="round"/>
<path d="M553.700 112.700C549 104 538 103 533 108C527 114 530 124 538 128C542 130.500 546 131 548 131.500A7 7 0 1 0 559.500 131.500C562 131 566 130 569 128C577 124 579.500 113 573.500 107.500C568 102.500 558 105 553.700 112.700Z" fill="#5b8d73"/>
<g transform="translate(290 310) scale(0.1302)">
<path d="M75 225C100 215 130 235 160 235C200 225 330 175 400 150C440 135 470 130 485 120C500 100 520 85 545 80C565 80 580 120 590 160C615 190 635 225 630 260C625 310 590 350 550 375C500 405 330 480 250 510C200 525 150 520 110 490C75 460 60 420 65 380C70 340 80 320 82 300C80 270 65 240 75 225Z" fill="#000"/>
</g>
<text transform="translate(306.500 360.300) rotate(-17.300)" font-family="Liberation Sans,sans-serif" font-size="9.800" fill="#f4f4f4" stroke="#f4f4f4" stroke-width=".3" textLength="61" lengthAdjust="spacingAndGlyphs">HuynhThienn</text>
<text transform="translate(310 368.800) rotate(-17.800)" font-family="Liberation Sans,sans-serif" font-size="9.800" fill="#f4f4f4" stroke="#f4f4f4" stroke-width=".3" textLength="55" lengthAdjust="spacingAndGlyphs">#Hoidap247</text>
<g transform="translate(295 375) scale(0.17361)">
<path d="M195 562L690 385L686 372L185 548Z" fill="#c3e6f0"/>
<path d="M35 255C45 235 95 220 120 205C135 180 165 125 200 95C240 60 320 35 360 40C400 42 450 60 480 75C500 60 550 40 575 40C595 38 608 45 610 60C615 100 615 140 622 165C640 220 660 280 667 315C672 350 665 368 648 378C600 405 480 455 400 490C340 515 280 540 250 547C215 555 185 548 160 528C130 500 120 460 112 430C105 400 90 365 70 335C50 305 25 280 35 255Z" fill="#000"/>
<path d="M240 190C255 150 280 125 310 115C345 105 370 108 385 115C410 135 440 170 470 200C500 235 535 280 545 300C550 325 540 345 520 360C480 385 420 412 380 430C340 447 300 462 275 462C245 460 222 440 210 400C200 360 198 320 202 285C208 245 225 215 240 190Z" fill="#c8304c"/>
<path d="M262 275C265 245 290 215 330 200C370 190 410 205 428 235C442 265 432 295 400 312C365 328 320 335 292 325C270 315 258 298 262 275Z" fill="#000"/>
<path d="M318 200C328 185 350 185 354 200L360 285C358 302 338 305 332 292Z" fill="#c8304c"/>
<path d="M300 362C315 342 345 328 385 320C420 315 445 325 455 342C460 362 445 380 420 392C390 405 350 418 320 422C298 420 288 395 300 362Z" fill="#f26c6c"/>
<path d="M352 330L366 402" stroke="#c8304c" stroke-width="5" fill="none"/>
<path d="M225 218C222 190 245 155 270 135C290 115 330 100 365 105C388 112 395 135 385 160C375 172 355 165 340 152C325 145 305 152 290 172C280 190 278 215 265 228C248 238 230 235 225 218Z" fill="#f2dfc6" stroke="#6b3a2a" stroke-width="3"/>
<path d="M215 418C225 398 255 388 275 398C285 405 290 415 292 420C305 408 330 405 345 418C355 400 385 392 402 396C410 382 435 370 458 372C455 352 462 335 478 320C495 305 525 300 542 312C548 330 540 348 520 360C480 385 420 412 380 430C340 447 300 462 275 462C245 460 222 445 215 418Z" fill="#f2dfc6" stroke="#6b3a2a" stroke-width="3"/>
<path d="M148 252C150 215 175 165 205 150C215 158 200 200 185 232C172 258 150 268 148 252Z" fill="none" stroke="#ececec" stroke-width="7"/>
<path d="M372 82C400 68 460 92 490 125C492 142 462 138 430 122C400 108 368 98 372 82Z" fill="none" stroke="#ececec" stroke-width="7"/>
<path d="M118 300L140 322M124 326L150 350M515 148L530 165M522 178L546 190M528 160l14-12" stroke="#dcdcdc" stroke-width="4.500" fill="none"/>
</g>
</svg>
<div class="dark" style="left:835px;top:58px;width:3px;height:473px"></div>
<div style="left:838px;top:58px;width:186px;height:474px;background:#d3d8db"></div>
<div class="ph" style="left:838px;top:57.5px;width:186px;height:16.5px">Layer</div>
<div class="pbtn" style="left:1000.5px;top:62px"><svg style="left:0;top:0" width="10" height="10" viewBox="-0.5 0 10 10"><path d="M1.500 3.500h4.500v5H1.500zM4.500 5.500L8 1.500M5.500 1.500H8V4" stroke="#959a9d" stroke-width=".9" fill="none"/></svg></div>
<div class="pbtn" style="left:1012.5px;top:62px"><svg style="left:0;top:0" width="10" height="10" viewBox="-0.5 0 10 10"><path d="M2 2.500l5 5M7 2.500l-5 5" stroke="#959a9d" stroke-width="1.700" fill="none"/></svg></div>
<span class="tx" style="left:842px;top:82px;font-size:8px;color:#222">Opacity</span>
<div style="left:888px;top:79px;width:104px;height:12px;border:1px solid #3a78a8;background:linear-gradient(to right,#c4e2f6,#0d9df0)"></div>
<span class="tx" style="left:996px;top:82px;font-size:8px;color:#222">100 %</span>
<span class="tx" style="left:842px;top:102px;font-size:8px;color:#222">Blending</span>
<div style="left:890px;top:96px;width:129px;height:17px;background:#fff;border:1px solid #b9bdc0"><span class="tx" style="left:2px;top:5px;font-size:8px;color:#222">Normal</span><span class="tx" style="left:119px;top:6px;font-size:5px;color:#aaa">&#9660;</span></div>
<div class="cb" style="left:845px;top:120px"></div>
<span class="tx" style="left:858px;top:122px;font-size:8px;color:#222">Protect Alpha</span>
<div class="cb" style="left:917px;top:120px"></div>
<span class="tx" style="left:931px;top:122px;font-size:8px;color:#222">Clipping</span>
<div class="cb" style="left:972px;top:120px"></div>
<span class="tx" style="left:985px;top:122px;font-size:8px;color:#222">Lock</span>
<div style="left:840px;top:135px;width:167px;height:352px;background:#808080"></div>
<div style="left:838px;top:135px;width:2px;height:352px;background:#e2e4e5"></div>
<div class="lrow" style="top:136px">
<div style="left:14px;top:0;width:1px;height:29px;background:#555"></div>
<div style="left:4px;top:11px;width:7px;height:7px;border-radius:50%;background:#cfcfcf;border:1px solid #b0b0b0"></div>
<div class="chk" style="left:25px;top:1px;width:27px;height:27px;border:1px solid #c5c5c5;background-size:8px 8px;background-position:0 0,4px 4px"><svg style="left:0;top:0" width="25" height="25" viewBox="0 0 25 25"><path d="M8 17c-4-6 0-11 5.500-11s9 5 5 11M8 17l-.500 2M18.500 17l.500 2" stroke="#222" stroke-width="1" fill="none"/></svg></div>
<span class="tx" style="left:64px;top:10.700px;font-size:8.800px;color:#111;">Layer1</span>
</div>
<div class="lrow" style="top:166px">
<div style="left:14px;top:0;width:1px;height:29px;background:#555"></div>
<div style="left:4px;top:11px;width:7px;height:7px;border-radius:50%;background:#cfcfcf;border:1px solid #b0b0b0"></div>
<div class="chk" style="left:25px;top:1px;width:27px;height:27px;border:1px solid #c5c5c5;background-size:8px 8px;background-position:0 0,4px 4px"><svg style="left:0;top:0" width="25" height="25" viewBox="0 0 25 25"><ellipse cx="9" cy="11" rx="4.500" ry="4" fill="#ffe08c"/><ellipse cx="17.500" cy="11" rx="4.500" ry="4" fill="#ffe08c"/><circle cx="11.500" cy="9.500" r="1.300" fill="#111"/><circle cx="15" cy="9.500" r="1.300" fill="#111"/><path d="M11 16h1.500M14.500 16H16" stroke="#333" stroke-width=".8"/></svg></div>
<span class="tx" style="left:64px;top:10.700px;font-size:8.800px;color:#111;">Layer2</span>
</div>
<div class="lrow" style="top:196px">
<div style="left:14px;top:0;width:153px;height:29px;background:#6ec3f4"></div>
<div style="left:14px;top:0;width:1px;height:29px;background:#555"></div>
<div style="left:4px;top:11px;width:7px;height:7px;border-radius:50%;background:#cfcfcf;border:1px solid #b0b0b0"></div>
<div class="chk" style="left:25px;top:1px;width:27px;height:27px;border:1px solid #c5c5c5;background-size:8px 8px;background-position:0 0,4px 4px"><svg style="left:0;top:0" width="25" height="25" viewBox="0 0 25 25"><circle cx="3.500" cy="17" r="1.500" fill="#222"/><circle cx="4.500" cy="14.500" r="1" fill="#222"/><circle cx="4" cy="17.500" r=".7" fill="#c33"/></svg></div>
<span class="tx" style="left:64px;top:10.700px;font-size:8.800px;color:#111;font-weight:bold;">Layer4</span>
<svg style="left:151px;top:8px" width="13" height="13" viewBox="0 0 13 13"><rect x="5.300" y="0.300" width="2.400" height="3.200" rx=".5" fill="#fff" transform="rotate(0 6.500 6.500)"/><rect x="5.300" y="0.300" width="2.400" height="3.200" rx=".5" fill="#fff" transform="rotate(45 6.500 6.500)"/><rect x="5.300" y="0.300" width="2.400" height="3.200" rx=".5" fill="#fff" transform="rotate(90 6.500 6.500)"/><rect x="5.300" y="0.300" width="2.400" height="3.200" rx=".5" fill="#fff" transform="rotate(135 6.500 6.500)"/><rect x="5.300" y="0.300" width="2.400" height="3.200" rx=".5" fill="#fff" transform="rotate(180 6.500 6.500)"/><rect x="5.300" y="0.300" width="2.400" height="3.200" rx=".5" fill="#fff" transform="rotate(225 6.500 6.500)"/><rect x="5.300" y="0.300" width="2.400" height="3.200" rx=".5" fill="#fff" transform="rotate(270 6.500 6.500)"/><rect x="5.300" y="0.300" width="2.400" height="3.200" rx=".5" fill="#fff" transform="rotate(315 6.500 6.500)"/><circle cx="6.500" cy="6.500" r="4.400" fill="#fff"/><circle cx="6.500" cy="6.500" r="1.700" fill="#6ec3f4"/></svg>
</div>
<div class="lrow" style="top:226px">
<div style="left:14px;top:0;width:1px;height:29px;background:#555"></div>
<div style="left:4px;top:11px;width:7px;height:7px;border-radius:50%;background:#cfcfcf;border:1px solid #b0b0b0"></div>
<div class="chk" style="left:25px;top:1px;width:27px;height:27px;border:1px solid #c5c5c5;background-size:8px 8px;background-position:0 0,4px 4px"><svg style="left:0;top:0" width="25" height="25" viewBox="0 0 25 25"></svg></div>
<span class="tx" style="left:64px;top:10.700px;font-size:8.800px;color:#111;">Layer3</span>
</div>
<div style="left:1009px;top:143px;width:14px;height:334px;border:1px solid #999ea1;border-radius:4px;background:#c0c5c8"></div>
<span class="tx" style="left:1013px;top:137px;font-size:5px;color:#bbb">&#9650;</span>
<span class="tx" style="left:1013px;top:479px;font-size:5px;color:#bbb">&#9660;</span>
<div class="bb" style="left:843px;top:490px;width:19px"><svg width="17" height="17" viewBox="0 0 17 17"><path d="M4.500 2.500h5.500l3 3v9h-8.500z" fill="#fff" stroke="#555" stroke-width="1"/><path d="M10 2.500v3h3" fill="none" stroke="#555" stroke-width="1"/></svg></div>
<div class="bb" style="left:866px;top:490px;width:19px"><svg width="17" height="17" viewBox="0 0 17 17"><path d="M4.500 2.500h5.500l3 3v9h-8.500z" fill="#fff" stroke="#555" stroke-width="1"/><text x="8.700" y="13" text-anchor="middle" font-size="7" font-family="Liberation Sans,sans-serif" fill="#555">8</text></svg></div>
<div class="bb" style="left:889px;top:490px;width:19px"><svg width="17" height="17" viewBox="0 0 17 17"><path d="M4.500 2.500h5.500l3 3v9h-8.500z" fill="#fff" stroke="#555" stroke-width="1"/><text x="8.700" y="13" text-anchor="middle" font-size="7" font-family="Liberation Sans,sans-serif" fill="#555">1</text></svg></div>
<div class="bb" style="left:912px;top:490px;width:24px;border-color:#d9dcde;background:#f3f4f4"><span class="tx" style="left:15px;top:7px;font-size:5px;color:#444">&#9660;</span></div>
<div class="bb" style="left:939px;top:490px;width:19px"><svg width="17" height="17" viewBox="0 0 17 17"><path d="M2.500 4.500h5l1.500 1.500h5.500v8h-12z" fill="#4a4a4a"/></svg></div>
<div class="sep" style="left:962px;top:494px;height:10px"></div>
<div class="bb" style="left:967px;top:490px;width:19px"><svg width="17" height="17" viewBox="0 0 17 17"><rect x="6.500" y="3.500" width="8" height="8" fill="#fff" stroke="#555"/><rect x="3.500" y="6.500" width="8" height="8" fill="#fff" stroke="#555"/></svg></div>
<div class="bb" style="left:991px;top:490px;width:19px"><svg width="17" height="17" viewBox="0 0 17 17"><rect x="3" y="3" width="4" height="4" fill="none" stroke="#444"/><rect x="3" y="10" width="4" height="4" fill="none" stroke="#444"/><rect x="10.500" y="6.500" width="4.500" height="4.500" fill="#444"/><path d="M7 5l3.500 3M7 12l3.500-3" stroke="#444"/></svg></div>
<div style="left:1015px;top:490px;width:8px;height:19px;border:1px solid #b5b9bc;border-radius:2px;background:#eef0f0"></div>
<div style="left:839px;top:514px;width:28px;height:17px;background:#d3d8db;border:1px solid #b2b6b9;border-top:none"><span class="tx" style="left:3px;top:6px;font-size:8px;color:#222">Layer</span></div>
<div style="left:867px;top:514px;width:44px;height:15px;background:#dcdfe1;border:1px solid #aaaeb1;border-top:none"><span class="tx" style="left:4px;top:4px;font-size:8px;color:#a0a4a7">Navigator</span></div>
<div style="left:0;top:532px;width:1024px;height:14px;background:#d3d8db"></div>
<span class="tx" style="left:5px;top:535px;font-size:9px;letter-spacing:-0.33px;color:#2a2a2a">500 * 500 pixel</span>
<span class="tx" style="left:67px;top:535px;font-size:9px;letter-spacing:-0.19px;color:#2a2a2a">(3.6 * 3.6cm)</span>
<span class="tx" style="left:123px;top:535px;font-size:9px;letter-spacing:-0.15px;color:#2a2a2a">350 dpi</span>
<span class="tx" style="left:158.3px;top:535px;font-size:9px;letter-spacing:-0.5px;color:#2a2a2a">150 %</span>
<span class="tx" style="left:188px;top:535px;font-size:9px;letter-spacing:-0.37px;color:#2a2a2a">( 496, 175 )</span>
<span class="tx" style="left:237px;top:535px;font-size:9px;letter-spacing:-0.02px;color:#2a2a2a">Draw a straight line by holding down Shift, Change a brush size by holding down Ctrl, Alt, and dragging</span>
<div style="left:240px;top:529.600px;width:598px;height:1.200px;background:#707375"></div>
<div style="left:0;top:546px;width:1024px;height:30px;background:#6f8cba"></div>
<div style="left:1021px;top:546px;width:1px;height:30px;background:#93a8cc"></div>
<svg style="left:12px;top:555px" width="13" height="13" viewBox="0 0 13 13"><path d="M0 1.800L5.300 1v5H0zM6 .9L13 0v6H6zM0 6.800h5.300v5L0 11zM6 6.800h7V13l-7-1z" fill="#fff"/></svg>
<svg style="left:47px;top:554px" width="14" height="15" viewBox="0 0 14 15"><circle cx="8.500" cy="5.500" r="4.300" fill="none" stroke="#fff" stroke-width="1.300"/><path d="M5.500 8.800L1 14" stroke="#fff" stroke-width="1.500"/></svg>
<svg style="left:81px;top:555px" width="18" height="13" viewBox="0 0 18 13"><rect x="4" y="1.500" width="10" height="10" fill="none" stroke="#fff" stroke-width="1.100"/><path d="M2.500 3.500H.600v6h1.900M15.500 3.500h1.900v6h-1.900" fill="none" stroke="#fff" stroke-width="1.100"/></svg>
<svg style="left:119px;top:553px" width="18" height="16" viewBox="0 0 18 16"><rect x="1" y="1" width="6" height="6" fill="#f4eee6"/><rect x="11" y="1" width="6" height="6" fill="#f4eee6"/><rect x="6" y="8" width="6" height="6" fill="#f4eee6"/><rect x="2.500" y="2.500" width="3" height="3" fill="#d8452e"/><rect x="12.500" y="2.500" width="3" height="3" fill="#d8452e"/><rect x="7.500" y="9.500" width="3" height="3" fill="#d8452e"/><path d="M7 4h4M9 4v4" stroke="#f4eee6" stroke-width="1.200"/></svg>
<svg style="left:156px;top:553px" width="18" height="16" viewBox="0 0 18 16"><path d="M1 2h6l1.500 2H17v10H1z" fill="#f5c84c"/><path d="M1 5.500h16V14H1z" fill="#fbe08a"/><rect x="3" y="9" width="12" height="5" fill="#3f9be0"/><rect x="7" y="11" width="4" height="3" fill="#fbe08a"/></svg>
<svg style="left:192px;top:551px" width="20" height="20" viewBox="0 0 20 20"><circle cx="10" cy="10" r="9.500" fill="#fff"/><rect x="3" y="4.500" width="14" height="10.500" rx="3.500" fill="#1a73e8"/><path d="M5 14l-1 3 4-2.500z" fill="#1a73e8"/><text x="10" y="12" text-anchor="middle" font-family="Liberation Sans,sans-serif" font-size="5.500" font-weight="bold" fill="#fff">Zalo</text></svg>
<div style="left:187px;top:574px;width:29.500px;height:2px;background:#b9cbe6"></div>
<svg style="left:229px;top:552px" width="18" height="18" viewBox="0 0 18 18"><ellipse cx="9" cy="9" rx="8.500" ry="8.500" fill="#e8242c"/><ellipse cx="9" cy="9" rx="4" ry="6.300" fill="#6f8cba"/></svg>
<div style="left:223px;top:574px;width:29px;height:2px;background:#b9cbe6"></div>
<svg style="left:266px;top:553px" width="18" height="17" viewBox="0 0 18 17"><path d="M3 9c0-4 4-6.500 8-5.500s5 5 2 6.500c-2 1-2 2-1.500 3.500S8 16 5.500 14 3 11 3 9z" fill="#e9d9b0" stroke="#9a8f78" stroke-width=".7"/><circle cx="6.500" cy="8" r="1.200" fill="#e33"/><circle cx="9.500" cy="6" r="1.200" fill="#3a6"/><circle cx="7" cy="11.500" r="1.200" fill="#36c"/><path d="M10 11l5.500-8 1 .8-5 8.200z" fill="#c78b3a"/></svg>
<div style="left:260px;top:574px;width:29.500px;height:2px;background:#b9cbe6"></div>
<div style="left:295px;top:546px;width:35px;height:30px;background:#94aacd"></div>
<div style="left:295px;top:574px;width:35px;height:2px;background:#cfdcf0"></div>
<svg style="left:304px;top:553px" width="17" height="15" viewBox="0 0 17 15"><rect width="17" height="15" fill="#fff"/><rect x="1" y="1" width="15" height="5" fill="#d8242c"/><rect x="1" y="7" width="15" height="7" fill="#222"/><text x="8.500" y="13" text-anchor="middle" font-family="Liberation Sans,sans-serif" font-size="5" font-weight="bold" fill="#fff">PAINT</text></svg>
<svg style="left:832px;top:554px" width="14" height="13" viewBox="0 0 14 13"><circle cx="4.500" cy="6" r="2" fill="none" stroke="#fff" stroke-width="1.100"/><path d="M1 12.500c0-3 1.500-4 3.500-4s3.500 1 3.500 4" fill="none" stroke="#fff" stroke-width="1.100"/><circle cx="10" cy="3" r="1.700" fill="none" stroke="#fff" stroke-width="1.100"/><path d="M8.500 6.500c1-1 3-1 4 .5" fill="none" stroke="#fff" stroke-width="1.100"/></svg>
<svg style="left:859px;top:558px" width="11" height="7" viewBox="0 0 11 7"><path d="M1 6l4.500-4.500L10 6" fill="none" stroke="#fff" stroke-width="1.200"/></svg>
<svg style="left:876px;top:555px" width="13" height="12" viewBox="0 0 13 12"><rect x="3.500" y="3.500" width="9" height="6" fill="none" stroke="#fff" stroke-width="1"/><path d="M1 1.500h3v3M5 11h6" fill="none" stroke="#fff" stroke-width="1"/><rect x="5" y="5" width="6" height="3" fill="#fff"/></svg>
<svg style="left:893px;top:554px" width="14" height="13" viewBox="0 0 14 13"><path d="M1.500 4.500h2.500l3-3v10l-3-3H1.500z" fill="none" stroke="#fff" stroke-width="1"/><path d="M9 4c1 1.200 1 3.800 0 5M11 2.500c1.800 2 1.800 6 0 8" fill="none" stroke="#dfe6f2" stroke-width=".9"/></svg>
<span class="tx" style="left:914px;top:556px;font-size:8.500px;color:#fff">ENG</span>
<span class="tx" style="left:944px;top:549px;font-size:8.500px;color:#fff">6:40 PM</span>
<span class="tx" style="left:943px;top:563px;font-size:8.500px;color:#fff">9/8/2021</span>
<svg style="left:992px;top:554px" width="20" height="18" viewBox="0 0 20 18"><path d="M1.500 1.500h11v8h-7l-2.500 2.500v-2.500h-1.500z" fill="#fff"/><path d="M3.500 4h7M3.500 6h7" stroke="#6f8cba" stroke-width=".8"/><circle cx="13.500" cy="11.500" r="4.500" fill="#a9b9d4" stroke="#8fa2c4" stroke-width=".6"/><text x="13.500" y="14" text-anchor="middle" font-family="Liberation Sans,sans-serif" font-size="7" fill="#fff">1</text></svg>
</body>
</html>
